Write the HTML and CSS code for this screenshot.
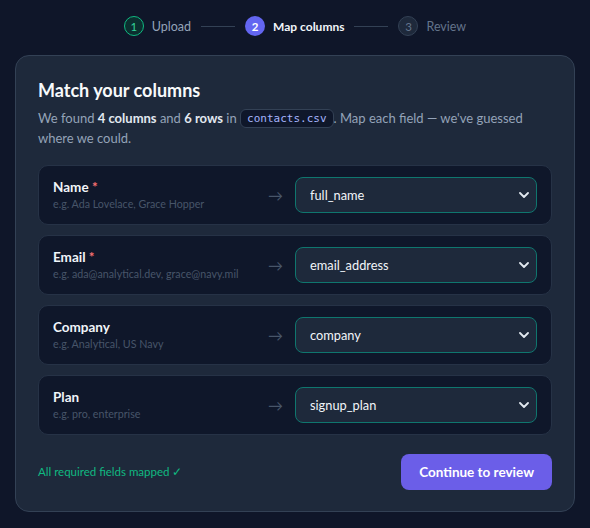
FILE: index.html
```html
<!DOCTYPE html>
<html>
<head>
<meta charset="utf-8">
<link rel="stylesheet" href="styles.css">
</head>
<body>
<nav class="stepper">
  <div class="step done"><span class="dot">1</span><span class="step-label">Upload</span></div>
  <span class="line"></span>
  <div class="step current"><span class="dot">2</span><span class="step-label">Map columns</span></div>
  <span class="line"></span>
  <div class="step todo"><span class="dot">3</span><span class="step-label">Review</span></div>
</nav>
<main class="card">
  <h1 class="title">Match your columns</h1>
  <p class="desc">We found <b>4 columns</b> and <b>6 rows</b> in <code class="file">contacts.csv</code>. Map each field — we've guessed where we could.</p>
  <div class="rows">
    <div class="row">
      <div class="field"><div class="name">Name <span class="req">*</span></div><div class="hint">e.g. Ada Lovelace, Grace Hopper</div></div>
      <span class="arrow">→</span>
      <div class="select-wrap"><select class="select"><option>full_name</option></select><svg class="chev" viewBox="0 0 10 6" width="10" height="6"><path d="M1 1l4 4 4-4" fill="none" stroke="#e2e8f0" stroke-width="1.8" stroke-linecap="round" stroke-linejoin="round"/></svg></div>
    </div>
    <div class="row">
      <div class="field"><div class="name">Email <span class="req">*</span></div><div class="hint">e.g. ada@analytical.dev, grace@navy.mil</div></div>
      <span class="arrow">→</span>
      <div class="select-wrap"><select class="select"><option>email_address</option></select><svg class="chev" viewBox="0 0 10 6" width="10" height="6"><path d="M1 1l4 4 4-4" fill="none" stroke="#e2e8f0" stroke-width="1.8" stroke-linecap="round" stroke-linejoin="round"/></svg></div>
    </div>
    <div class="row">
      <div class="field"><div class="name">Company</div><div class="hint">e.g. Analytical, US Navy</div></div>
      <span class="arrow">→</span>
      <div class="select-wrap"><select class="select"><option>company</option></select><svg class="chev" viewBox="0 0 10 6" width="10" height="6"><path d="M1 1l4 4 4-4" fill="none" stroke="#e2e8f0" stroke-width="1.8" stroke-linecap="round" stroke-linejoin="round"/></svg></div>
    </div>
    <div class="row">
      <div class="field"><div class="name">Plan</div><div class="hint">e.g. pro, enterprise</div></div>
      <span class="arrow">→</span>
      <div class="select-wrap"><select class="select"><option>signup_plan</option></select><svg class="chev" viewBox="0 0 10 6" width="10" height="6"><path d="M1 1l4 4 4-4" fill="none" stroke="#e2e8f0" stroke-width="1.8" stroke-linecap="round" stroke-linejoin="round"/></svg></div>
    </div>
  </div>
  <div class="footer">
    <span class="ok">All required fields mapped ✓</span>
    <button class="btn">Continue to review</button>
  </div>
</main>
</body>
</html>
```
FILE: styles.css
```css
* { box-sizing: border-box; }
html, body { margin: 0; padding: 0; }
body {
  background: #0f1629;
  font-family: Lato, "Noto Sans", sans-serif;
  color: #e2e8f0;
  width: 590px;
  height: 528px;
  overflow: hidden;
}
.stepper {
  display: flex;
  align-items: center;
  justify-content: center;
  gap: 10px;
  height: 52px;
}
.step { display: flex; align-items: center; gap: 8px; font-size: 12.5px; }
.dot {
  width: 20px; height: 20px; border-radius: 50%;
  display: flex; align-items: center; justify-content: center;
  font-size: 11.5px; border: 1.5px solid transparent;
}
.done .dot { border-color: #10b981; background: #0b2f2f; color: #34d399; }
.done .step-label { color: #94a3b8; }
.current .dot { background: #6366f1; color: #fff; font-weight: 700; }
.current .step-label { color: #f1f5f9; font-weight: 700; font-size: 12px; }
.todo .dot { background: #1e293b; border-color: #334155; color: #64748b; }
.todo .step-label { color: #64748b; }
.line { width: 34px; height: 1px; background: #334155; }

.card {
  margin: 3px 15px 0;
  background: #1e293b;
  border: 1px solid #334155;
  border-radius: 14px;
  padding: 21px 22px 21px;
}
.title { margin: 0; font-size: 18px; font-weight: 700; color: #f8fafc; line-height: 26px; }
.desc {
  margin: 5px 0 17px;
  font-size: 13px;
  line-height: 20px;
  color: #94a3b8;
}
.desc b { color: #e2e8f0; font-weight: 700; }
.file {
  display: inline-block;
  font-family: "DejaVu Sans Mono", monospace;
  font-size: 11px;
  line-height: 17px;
  color: #a5b4fc;
  background: #0f172a;
  border: 1px solid #334155;
  border-radius: 6px;
  padding: 0 6px;
  vertical-align: 1px;
}
.rows { display: flex; flex-direction: column; gap: 10px; }
.row {
  display: flex; align-items: center;
  background: #0f172a;
  border: 1px solid #263246;
  border-radius: 10px;
  padding: 11px 14px;
  height: 60px;
}
.field { flex: 1; min-width: 0; }
.name { font-size: 13.5px; font-weight: 700; color: #f1f5f9; line-height: 18px; }
.req { color: #f87171; }
.hint { font-size: 10.7px; color: #475569; line-height: 16px; }
.arrow { color: #475569; font-size: 15px; margin-right: 12px; }
.select-wrap { position: relative; width: 242px; }
.select {
  appearance: none; -webkit-appearance: none;
  width: 100%; height: 36px;
  background: #1e293b;
  border: 1px solid #0f766e;
  border-radius: 8px;
  color: #f1f5f9;
  font-family: inherit;
  font-size: 12.8px;
  padding: 0 14px;
}
.chev { position: absolute; right: 8px; top: 15px; }
.footer {
  display: flex; align-items: center; justify-content: space-between;
  margin-top: 19px;
}
.ok { color: #10b981; font-size: 11.5px; }
.btn {
  background: #6b5ee8;
  color: #fff;
  border: 0;
  border-radius: 8px;
  height: 36px;
  padding: 0 18px;
  font-family: inherit;
  font-size: 13.5px;
  font-weight: 700;
}
```
